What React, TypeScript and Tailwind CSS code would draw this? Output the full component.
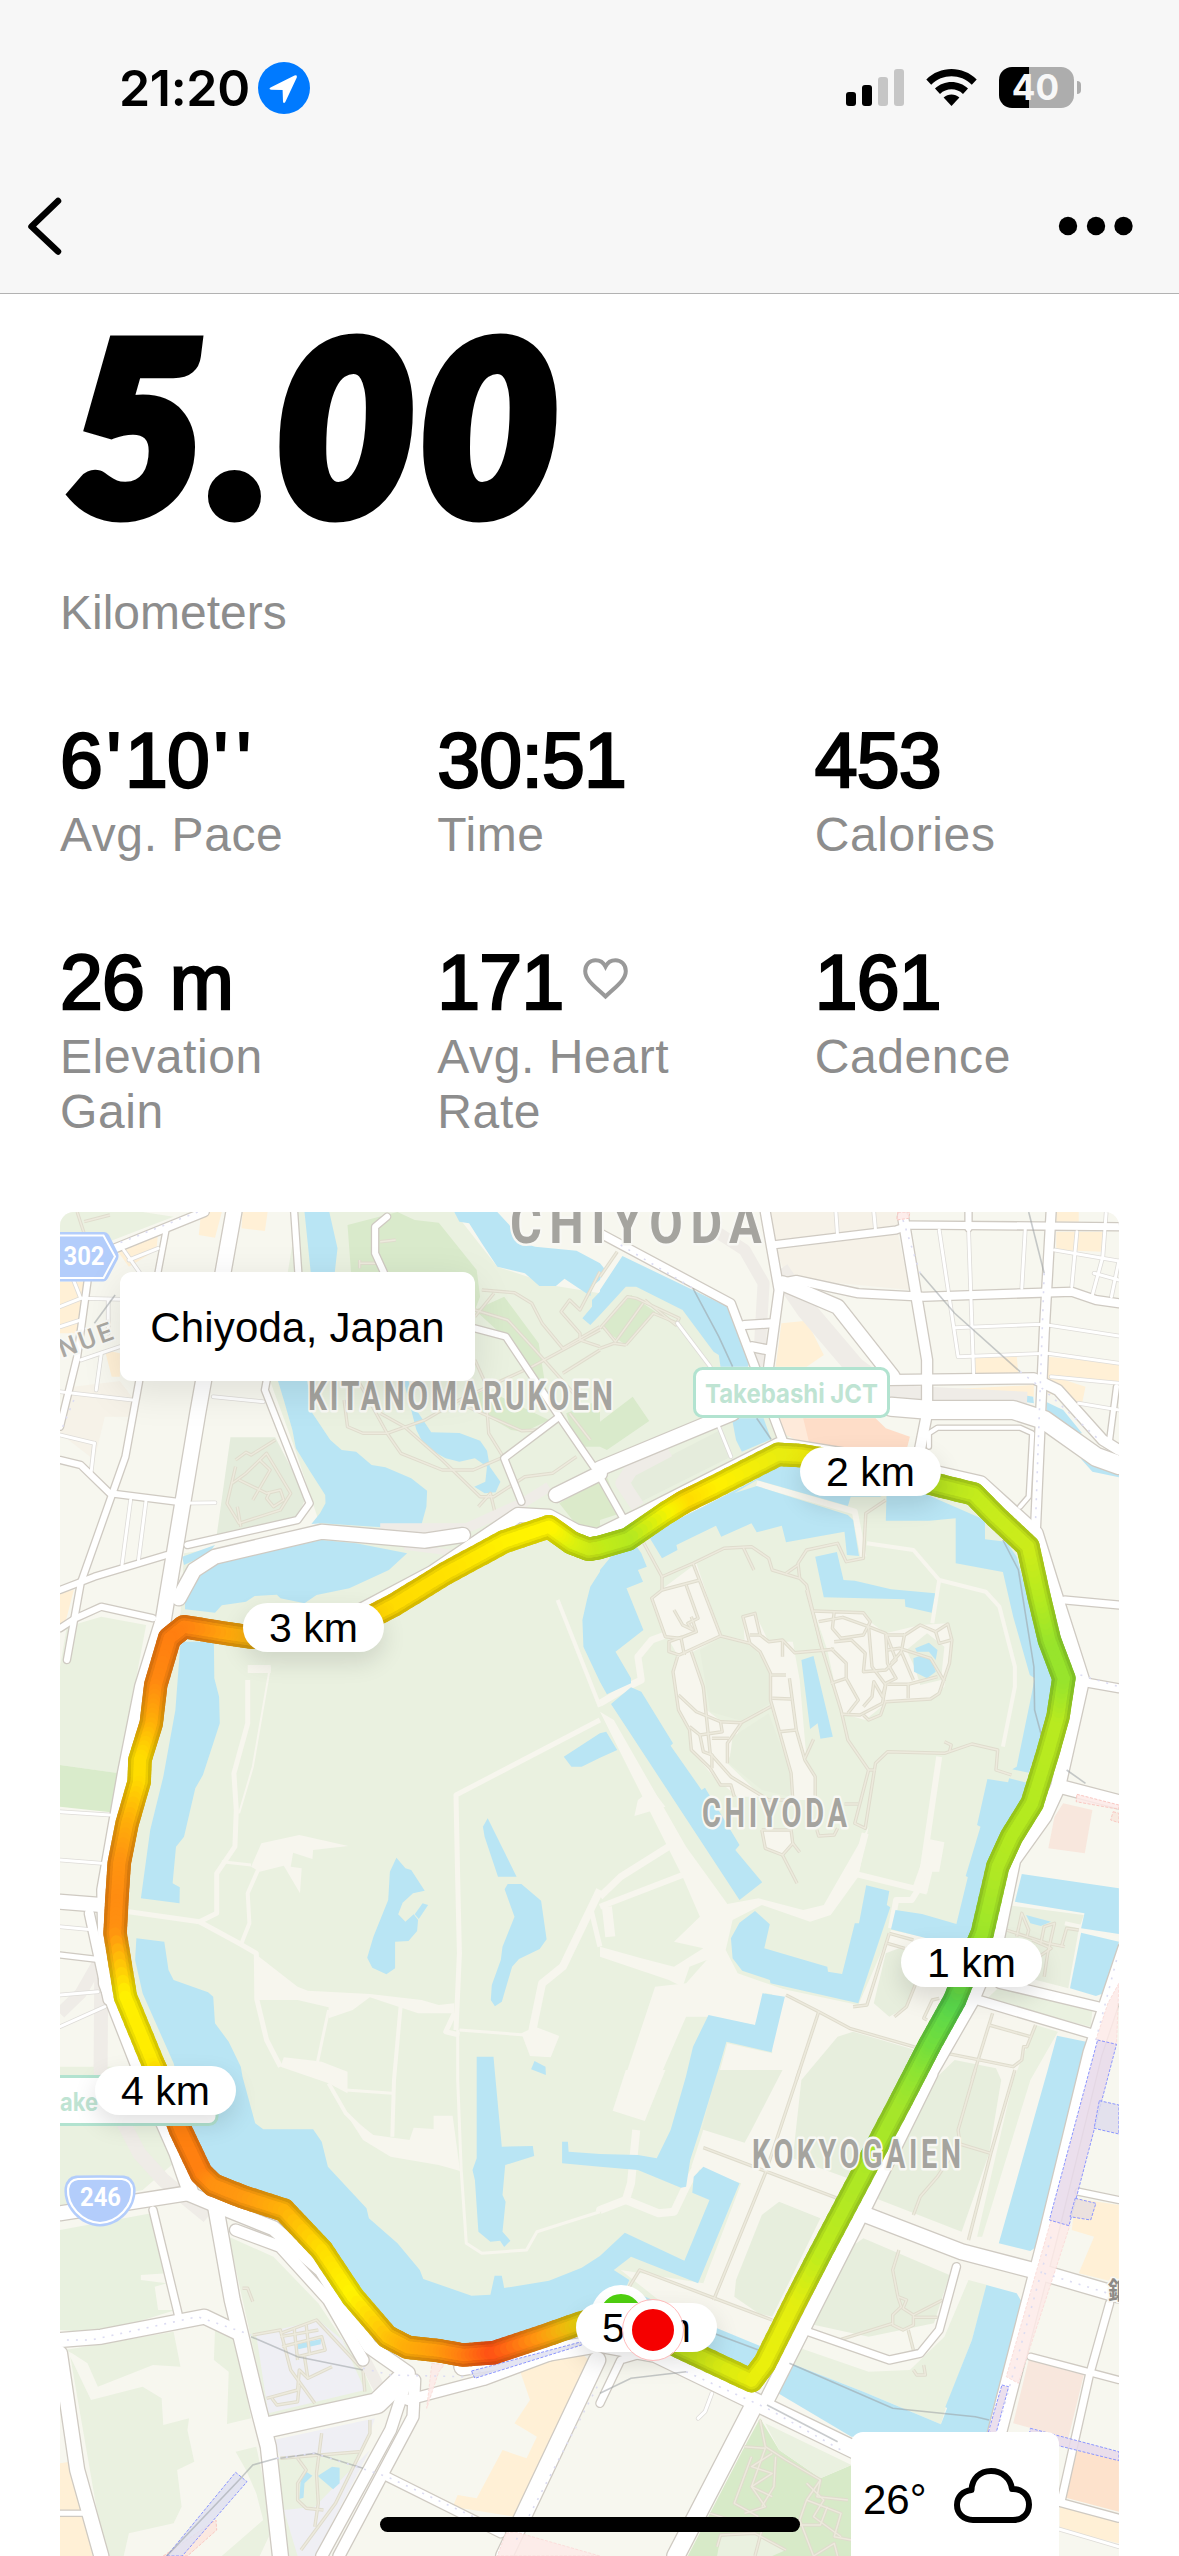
import React from "react";

/* ------------------------------------------------------------------ */
/* Map geometry. The map is surveyed on six sheets (A–F); a letter in a  */
/* point list switches to that sheet's origin.                          */
/* ------------------------------------------------------------------ */

const SHEETS: Record<string, [number, number]> = {
  A: [60, 1200],
  B: [600, 1200],
  C: [60, 1600],
  D: [600, 1600],
  E: [60, 2070],
  F: [600, 2070],
};

type Point = [number, number];

function toPoints(src: string): Point[] {
  let origin = SHEETS.A;
  const out: Point[] = [];
  for (const token of src.trim().split(/\s+/)) {
    if (SHEETS[token]) {
      origin = SHEETS[token];
      continue;
    }
    const [x, y] = token.split(",").map(Number);
    out.push([origin[0] + x / 2.904, origin[1] + y / 3]);
  }
  return out;
}

function toPath(src: string, closed = false): string {
  return (
    "M" +
    toPoints(src)
      .map(([x, y]) => `${x.toFixed(1)} ${y.toFixed(1)}`)
      .join("L") +
    (closed ? "Z" : "")
  );
}

const LAND: [string, string][] = [
  // parks and palace grounds
  ["#eaf1e0", "A 0,36 240,36 330,50 130,130 0,110"],
  ["#eaf1e0", "A 690,36 1145,36 1270,200 1440,258 1568,280 B 0,280 75,200 240,300 385,500 600,655 540,720 0,980 A 1500,1000 1400,930 1190,1000 760,990 680,740 610,543"],
  ["#eaf1e0", "A 350,1240 360,1060 760,1000 1420,960 1500,1040 B 0,1060 300,920 520,760 1080,880 1250,1050 1300,1300 D 1345,240 1300,420 1220,640 1140,800 1080,1050 900,1440 F 440,930 0,780 E 1500,730 1170,850 990,820 780,540 640,400 430,330 C 280,1400 180,1180 160,990 180,750 230,480 300,150"],
  ["#d9eacb", "A 835,75 980,36 1030,60 1100,68 1210,210 1220,290 1205,330 1100,543 860,543 845,216"],
  ["#d9eacb", "A 1205,330 1290,290 1390,430 1410,560 1440,640 1350,500 1290,410"],
  ["#d9eacb", "A 1160,600 1240,570 1300,600 1420,660 1350,695 1310,690"],
  ["#d9eacb", "A 1470,640 1568,600 B 0,665 95,590 143,663 20,750 0,740 A 1500,740"],
  ["#dbeaca", "A 1450,910 1568,840 B 20,830 60,940 0,960 A 1568,985 1500,975"],
  ["#d9eacb", "B 5,385 90,285 160,335 75,435"],
  ["#e5ecdc", "B 85,830 350,690 380,770 110,910"],
  ["#e4ecdc", "A 495,712 625,712 715,890 690,950 455,1005"],
  ["#eaf1e0", "C 20,80 120,50 250,75 170,520 0,495 0,200"],
  ["#d9ebcb", "C 0,495 172,520 148,637 0,620"],
  ["#eaf1e0", "C 0,1400 170,1400 E 290,168 330,280 240,360 0,410"],
  ["#e8f1df", "E 0,480 265,430 310,610 235,615 235,630 310,640 275,650 285,720 335,720 120,790 0,780"],
  ["#eaf1e0", "E 490,500 620,560 750,700 880,900 910,970 605,1040"],
  ["#eaf1e0", "E 15,840 330,785 350,890 270,885 110,950 80,880 35,850"],
  ["#eaf1e0", "E 450,780 510,810 555,1045 485,1062 490,905 447,870"],
  ["#eaf1e0", "E 30,860 90,990 240,950 295,985 300,1065 375,1045 370,1080 390,1175 340,1200 353,1310 330,1360 200,1390 185,1458 130,1458"],
  ["#eaf1e0", "E 510,1145 570,1130 620,1370 580,1458 470,1458 590,1350 570,1270 540,1200"],
  ["#eaf1e0", "E 620,1165 880,1140 800,1300 700,1458 650,1458"],
  ["#efeff4", "E 570,795 750,750 820,810 885,960 605,1030"],
  ["#efeff4", "E 620,1110 915,1045 880,1140 640,1165"],
  ["#efeff4", "E 650,1320 740,1310 900,1140 740,1458 690,1458"],
  ["#d7eac8", "F 420,1130 465,1045 520,1140 640,1225 730,1185 730,1458 255,1458"],
  ["#eaf1e0", "F 480,1060 730,1185 640,1225 520,1140"],
  ["#eaf1e0", "F 350,1400 450,1390 540,1440 500,1458 340,1458"],
  // built-up blocks
  ["#fff0d6", "A 410,36 470,36 450,113 403,105"],
  ["#fff0d6", "A 530,36 603,36 595,93 527,85"],
  ["#fff0d6", "A 165,150 285,100 280,150 200,200"],
  ["#fff0d6", "A 0,245 70,245 50,400 0,400"],
  ["#fff0d6", "A 130,450 174,460 174,530 150,530"],
  ["#fff0d6", "A 0,1180 40,1170 10,1290 0,1290"],
  ["#f6f2e8", "A 40,560 174,543 215,600 200,650 130,650 100,780 0,700"],
  ["#f6f2e8", "B 480,36 860,36 865,85 510,130"],
  ["#f6f2e8", "B 510,150 865,100 900,270 600,240 540,225"],
  ["#fff0d6", "B 527,370 600,362 650,465 600,500 510,500"],
  ["#feeada", "B 500,655 595,655 610,740 540,705"],
  ["#feddc8", "B 590,655 800,655 830,685 900,710 890,750 610,740"],
  ["#fff0d6", "B 1090,465 1210,468 1215,525 1090,525"],
  ["#fff0d6", "B 1300,470 1507,490 1507,545 1320,530 1410,560 1400,610 1300,580"],
  ["#fff0d6", "B 975,570 1260,555 1260,590 980,585"],
  ["#fff0d6", "B 1325,36 1390,36 1390,65 1325,65"],
  ["#fff0d6", "B 1325,95 1460,95 1460,155 1325,150"],
  ["#f8e7dd", "D 1345,610 1430,630 1408,760 1302,745 1320,650"],
  ["#e9efdf", "D 1180,915 1405,945 1390,990 1360,1165 1230,1130 1160,1050"],
  ["#eaf1e0", "D 1160,1160 1430,1230 1425,1280 1120,1200"],
  ["#fff0d6", "F 1380,385 1507,405 1507,640 1390,610 1435,500 1370,480"],
  ["#f8e7dd", "F 1245,870 1405,915 1360,1105 1200,1060"],
  ["#fde2cc", "F 1380,1140 1507,1170 1507,1325 1342,1280"],
  ["#fff0d6", "F 1335,1310 1507,1350 1507,1420 1335,1380"],
  ["#fff0d6", "E 1335,900 1500,835 1545,880 1320,1340 1140,1310 1155,1275 1210,1285 1285,1140 1355,1165 1385,1100 1320,1060 1365,990"],
  ["#fff0d6", "E 0,1180 30,1175 95,1458 0,1458"],
  // plazas inside the palace grounds
  ["#f7f6ee", "D 500,1160 750,1215 845,990 1080,1040 1050,1200 F 440,910 60,600 300,640 410,340 265,290 300,180 D 370,1330 500,1360"],
  ["#f7f6ee", "F 820,100 980,20 D 1100,1210 1440,1290 F 1250,680 780,560 600,780 700,430"],
  ["#f7f6ee", "D 160,1160 250,1150 310,1080 330,1100 480,1180 450,1275 320,1250 250,1250 170,1440 70,1440"],
  ["#f7f6ee", "F 75,0 190,0 130,153 37,122"],
  ["#f7f6ee", "D 0,335 40,360 250,740 370,912 460,895 590,930 650,915 780,680 750,830 670,945 610,965 470,915 385,960 365,1050 400,1120 540,1170 540,1190 400,1165 340,1130 310,1080 260,1100 240,1160 200,1140 0,1070 0,1040 120,1075 215,1100 300,1045 215,1025 290,950 240,830"],
  ["#f7f6ee", "C 565,1060 690,1160 720,1172 900,1182 1050,1200 1100,1215 1145,1210 1145,1240 1040,1240 900,1192 850,1230 780,1255 780,1222 690,1200 565,1200"],
  ["#f7f6ee", "C 555,800 585,730 695,705 837,738 735,750 733,777 677,758 670,800 702,805 697,880 650,797 580,815"],
  ["#f7f6ee", "C 1340,1300 1380,1280 1450,1308 1425,1372 1365,1368"],
  ["#f7f6ee", "C 640,1400 650,1372 720,1380 760,1385 835,1415 E 835,70 780,40"],
  ["#f7f6ee", "E 830,130 910,195 1015,210 1027,173 1085,177 1085,137 1140,137 1162,303 1100,285 960,260 880,210"],
  ["#f7f6ee", "D 958,718 1000,727 985,815 965,815 950,880 905,870"],
  ["#f7f6ee", "D 100,648 110,600 150,568 190,620"],
  ["#f7f6ee", "D 620,30 765,35 790,70 830,100 930,75 1010,70 1020,120 1000,260 960,295 830,310 770,360 700,340 660,150"],
  ["#f7f6ee", "B 150,1190 280,1090 350,1305 D 420,120 415,50 450,40 490,125 560,125 580,240 600,480 625,530 625,600 560,600 556,520 495,320 470,160 435,130 350,110 270,155 310,330 350,362 410,368 370,490 470,590 400,590 330,530 265,450 260,380 225,330 212,215 225,165 195,110"],
  ["#f7f6ee", "D 470,690 560,690 560,730 530,765 480,745"],
  ["#e7eedd", "D 290,150 350,115 440,135 490,200 495,310 410,362 320,335"],
  ["#e7eedd", "D 490,340 555,520 550,590 470,570 375,490 385,410"],
  ["#e9efdf", "D 915,205 890,150 950,100 1000,140 990,240 930,255"],
  ["#e7eedd", "D 585,1440 690,1310 735,1295 915,1350 F 820,150 720,325 560,265"],
  ["#e7eedd", "F 340,0 530,0 440,180 420,218 295,178"],
  ["#e7eedd", "F 520,395 640,445 500,740 460,730 390,680 395,630 470,435"],
  ["#e7eedd", "D 1030,1380 1150,1405 F 1165,30 1130,250 1050,485 800,385 960,40"],
  ["#eaf1e0", "D 1265,1275 1330,1295 1250,1440 F 1110,500 1095,500 1200,30"],
  ["#e7eedd", "F 765,505 1015,615 970,760 780,800 600,760 730,530"],
  ["#eaf1e0", "F 1070,630 1125,645 1080,810 1005,1010 990,1063 765,965 550,878 570,830 780,905 900,900 1000,800"],
  ["#e7eedd", "D 830,1060 880,1040 930,1130 890,1220 840,1250 795,1210"],
];

const WATER: string[] = [
  "A 710,36 782,36 806,145 798,216 760,300 718,543 733,640 785,720 818,750 860,755 905,795 945,802 1020,835 1066,872 1064,920 1048,980 980,985 760,970 730,972 755,940 771,910 770,885 725,812 685,745 675,690 650,600 633,543 680,400 728,216",
  "A 1145,36 1160,65 1188,70 1225,130 1270,200 1350,220 1392,258 1440,258 1465,236 1540,288 1545,260 1568,240 B 12,205 0,190 A 1500,152 1380,140 1330,125 1305,75 1270,36",
  "A 1545,300 1545,320 1517,355 1540,375 1568,345 B 75,260 105,260 240,330 330,455 345,465 350,500 430,500 436,470 410,400 370,320 270,270 65,168 0,270 A 1568,275",
  "B 383,655 475,655 497,718 412,755 395,720",
  "A 998,543 1012,543 1035,630 1078,697 1160,699 1220,722 1240,752 1248,800 1279,845 1265,877 1233,880 1203,860 1235,845 1240,800 1205,775 1160,785 1120,775 1060,740 1035,690 1020,630",
  "A 363,1228 450,1238 470,1216 540,1205 565,1188 630,1184 640,1195 710,1210 745,1185 840,1165 955,1110 1008,1060 860,1030 760,1020 450,1090 420,1110 395,1145 363,1200",
  "A 360,1095 355,1070 450,1035 430,1062",
  "B 145,1015 180,1075 225,1050 222,1035 337,977 352,1010 440,970 455,997 528,977 540,1027 710,995 717,1065 752,1068 735,960 720,945 455,858 390,880 455,840 720,918 728,890 818,890 770,870 582,790 520,785 450,840 300,920 145,1000",
  "B 832,885 830,962 957,962 1033,955 1033,1090 1170,1116 1200,1250 D 1248,225 1262,235 1252,290 1210,500 1197,508 1245,518 1283,410 1320,240 1245,0 B 1210,1070 1180,1025 1118,1018 1118,960 940,880",
  "B 625,1070 688,1056 707,1140 740,1142 845,1168 973,1180 963,1238 887,1220 885,1198 650,1192",
  "B 0,1110 40,1060 100,1030 120,1060 136,1100 110,1110 125,1145 77,1165 126,1290 D 45,155 90,235 90,250 20,283 C 1568,245 1520,140 1517,60 1530,0 A 1540,1160 1568,1115",
  "D 32,312 90,262 120,275 212,430 205,437 295,570 305,563 405,735 393,750 471,847 405,900",
  "D 585,180 620,168 676,410 640,416 632,370 610,387",
  "C 1463,470 1568,400 D 18,395 50,450 0,473 C 1515,500 1485,500",
  "D 910,175 935,165 965,180 975,215 950,235 912,215",
  "D 915,145 955,128 980,150 975,180 955,155 920,155",
  "D 380,1015 405,968 450,933 493,973 477,1045 660,1100 662,1115 703,1122 740,970 752,970 773,856 840,873 833,915 843,922 750,1210 495,1150 493,1140 413,1112 385,1075",
  "D 1125,537 1185,547 1188,535 1240,548 1228,620 1150,800 1088,1025 1000,1028 845,988 858,930 935,942 1035,972 1068,832 1062,828 1105,680 1095,675",
  "D 1225,822 1507,865 1507,1002 1397,985 1407,940 1205,905",
  "D 1397,998 1507,1025 1475,1175 1440,1188 1365,1165",
  "D 1237,945 1310,965 1280,978 1250,970",
  "D 1327,1307 1412,1325 1427,1355 F 1417,0 1275,525 1250,543 1158,520 1300,0",
  "F 1122,645 1210,670 1227,700 1120,1100 730,1100 510,965 550,878 765,965 990,1063 1008,1015 1003,1010 1080,810",
  "D 472,1180 537,1190 498,1357 367,1325 335,1440 F 343,0 290,180 262,270 250,350 235,353 110,300 0,290 E 1458,280 1458,215 1475,215 1477,245 F 0,252 110,255 165,265 205,180 255,0 D 247,1440 270,1340 315,1245 450,1275",
  "C 222,1015 303,1025 315,1110 330,1140 430,1177 445,1190 450,1270 490,1325 525,1400 E 530,20 567,160 590,178 735,178 760,215 778,290 890,415 897,445 980,520 1045,600 1055,627 1195,677 1250,674 1262,617 1283,617 1290,654 1420,632 1515,593 1568,558 F 72,488 245,572 318,390 268,368 272,320 300,290 405,340 285,640 90,560 40,600 85,630 75,655 340,775 465,828 435,890 240,830 0,770 E 1500,740 1300,805 1170,840 1000,820 900,720 780,540 660,410 450,320 380,170 C 330,1390 240,1180 218,1080",
  "C 350,125 447,125 448,235 462,290 464,370 415,525 393,565 360,710 337,740 327,850 348,862 347,910 235,895 262,690 300,530 335,330",
  "C 977,773 1003,805 1020,810 1059,872 1025,880 995,908 982,943 1003,965 1027,943 1040,960 1037,993 1012,1023 973,1025 973,1105 948,1123 907,1103 892,1073 910,1010 953,900 958,815",
  "C 1053,910 1069,915 1042,957 1030,943",
  "C 1242,655 1326,830 1272,830 1233,710 1228,680",
  "C 1300,852 1340,852 1397,902 1413,1018 1393,1047 1333,1077 1313,1100 1283,1205 1263,1219 1251,1200 1254,1155 1280,1080 1285,1040 1320,950 1291,868",
  "C 1210,1370 1259,1370 1265,1440 E 1283,230 1373,228 1377,258 1293,285 1285,375 1294,395 1285,485 1308,512 1290,531 1278,512 1250,515 1215,485 1205,330 1198,300 1210,265",
  "C 1378,1383 1410,1400 1411,1425 1368,1408",
  "E 690,822 758,807 757,823 692,838",
  "E 748,1218 790,1190 812,1193 812,1240 793,1258",
  "E 700,1215 715,1205 733,1217 710,1240 707,1283 695,1287",
  "B 990,590 1200,580 1258,590 1260,610 1190,600",
  "B 1295,605 1345,630 1400,700 1380,700 1298,640",
  "B 1395,775 1450,800 1507,825 1507,832 1430,815",
];

const PALACE_LANES: [number, string][] = [
  [4, "C 1445,0 1568,320"],
  [7, "D 0,310 90,255 120,240 110,170 150,120 190,105"],
  [5, "C 1568,360 1150,585 1155,840 1160,1060 1150,1290"],
  [3, "C 1155,1290 1155,1440 E 1165,300 1180,520 1225,550 1355,540 1385,485 1568,425"],
  [5, "C 200,935 405,965 455,940 455,820 508,740 512,630 505,520 545,370 545,240"],
  [2, "C 520,640 560,500 610,200"],
  [5, "C 405,965 520,1030 570,1060 572,1200 600,1320 640,1400"],
  [4, "E 780,40 830,130 910,210"],
  [3, "C 470,785 555,795"],
  [4, "C 575,810 545,880 550,970 525,1035"],
  [4, "C 990,1210 970,1440 E 965,200"],
  [3, "E 830,60 965,70"],
  [3, "C 780,1230 745,1400"],
  [3, "C 1160,1290 1350,1305"],
  [5, "C 1145,1240 1120,1295 1160,1305"],
  [8, "C 1370,1300 1400,1150 1460,1100 1568,870"],
  [5, "C 1540,920 1568,1040"],
  [7, "D 0,890 60,830 230,720"],
  [6, "D 0,920 240,825"],
  [10, "D 20,920 30,1010"],
  [6, "D 985,470 930,860 905,900 860,900 845,985"],
  [6, "D 735,820 950,875"],
  [7, "D 770,700 740,820"],
  [4, "B 775,1030 910,1050 985,1140 1120,1175 1160,1220 1205,1400 D 1205,260 1170,440"],
  [4, "B 985,1140 965,1270"],
  [6, "B 455,850 740,935 765,1070"],
  [8, "F 105,180 90,340 75,390 0,420 E 1568,425"],
  [8, "F 75,390 170,430 215,425 245,360 285,280"],
  [8, "C 545,207 612,207"],
  [4, "D 1350,970 1507,1005"],
];

const TRAILS: string[] = [
  "B 125,1025 180,1130 270,1090 360,1045 440,1040 490,1075 500,1110 580,1135 600,1155 D 640,130 700,330 720,420 780,510 740,670 770,685 800,490 835,455 1000,460 1080,432 1155,450 1150,510 1195,525",
  "B 180,1130 180,1170 150,1195 190,1310 D 230,115 280,95 265,50",
  "B 270,1090 350,1305",
  "B 180,1170 290,1140",
  "B 250,1155 285,1255 255,1270 270,1290 240,1275 215,1230",
  "B 415,1040 447,1110",
  "B 580,1135 575,1090 600,1050 690,1030 715,1085 765,1075 772,940 830,900",
  "B 540,1120 575,1095",
  "D 350,108 230,165 200,155 200,125 235,112 245,165",
  "D 225,170 212,215 228,330 260,390 265,450 320,505 350,555 380,555 390,590",
  "D 265,155 300,260 320,460 380,530 490,600 560,600 555,520 495,300 495,220 465,155 435,130 350,108",
  "D 228,285 280,335 350,365 410,368 495,320",
  "D 260,380 290,405 355,395 350,365",
  "D 290,405 300,455 325,465 325,505",
  "D 325,415 375,415",
  "D 410,370 370,430 370,490",
  "D 435,130 415,50 450,40 465,105 490,125 530,120 565,158 680,148",
  "D 435,105 465,105",
  "D 530,120 530,170",
  "D 550,235 570,390 595,480 625,530 625,600",
  "D 500,295 555,297",
  "D 495,225 540,225",
  "D 520,395 570,390",
  "D 620,418 595,475",
  "D 600,-30 645,145",
  "D 620,33 765,38 785,65 765,105 700,115 675,85 680,35",
  "D 635,65 705,52 780,80 790,200 830,255 820,310 755,345 700,343",
  "D 670,145 715,190 715,235 750,300 720,340",
  "D 670,250 715,235",
  "D 680,125 730,120 770,160 765,215 830,210 860,180 830,100 780,80",
  "D 830,105 835,190 860,235 830,250 820,290 795,245 790,290 765,320",
  "D 830,105 885,105 930,75 975,95 1010,72 1022,120 1015,190 985,280 960,297 830,305",
  "D 975,95 985,130 1020,120",
  "D 885,100 875,155 910,240",
  "D 835,150 870,145 960,175 1000,245",
  "D 875,155 845,190",
  "D 765,345 780,360 815,345 830,300",
  "D 895,250 895,295",
  "D 835,253 895,253 980,230",
  "D 470,690 480,745 530,765 560,730 555,690 470,690",
  "D 530,765 572,850",
  "D 560,730 580,757",
  "D 630,690 635,708 680,705 690,685",
  "D 710,612 750,612",
  "D 780,510 800,510",
  "D 1000,425 1020,435 1015,455",
  "D 840,1000 775,1215 735,1220",
  "D 840,1000 910,1020",
  "D 835,1030 885,1045",
  "D 540,1185 635,1235 725,1285 910,1340 1200,1400 1225,1380 1230,1340 1240,1340 1265,1275",
  "D 635,1235 570,1440",
  "D 1140,1240 1080,1440",
  "D 1130,1275 1250,1310",
  "D 1180,990 1300,1030 1350,1040",
  "D 1340,1040 1355,985 1390,990",
  "D 1210,1010 1225,940 1245,990 1240,1010",
  "D 1280,1030 1290,980 1320,970 1300,1060 1290,1130",
  "D 1255,1020 1310,1045 1260,1080",
  "D 925,1130 890,1220 855,1250",
  "D 985,1195 965,1200 940,1255 950,1260",
  "F 580,0 480,310 330,690",
  "F 300,233 690,385",
  "F 85,650 115,600 500,750",
  "F 1090,0 1040,180 1045,220 980,320 930,380 910,435",
  "F 1045,222 1135,250",
  "F 1205,0 1135,250 1070,510",
  "F 868,540 850,600 865,680 890,690 880,715 910,735 910,765 880,780 850,765 850,735 875,710 865,680",
  "F 910,735 995,690",
  "F 910,742 980,742",
  "F 895,780 910,840",
  "F 850,760 700,808",
  "F 910,900 920,915 945,915 940,885",
  "F 465,1050 480,1130 540,1170 640,1230 600,1290 580,1350 620,1458",
  "F 420,1130 480,1135 440,1250 480,1310 420,1330",
  "F 440,1160 390,1300 460,1340",
  "F 500,1150 440,1190 500,1210 440,1250 500,1280",
  "F 510,1160 505,1250 470,1310",
  "F 640,1230 630,1280 720,1290",
  "F 600,1290 700,1330 680,1400 730,1410",
  "F 600,1240 650,1290 620,1340 700,1400",
  "F 580,1365 640,1365 660,1310",
  "F 320,1330 470,1380 450,1458",
  "F 340,1430 350,1395 450,1390 540,1440",
  "F 620,1458 680,1420 690,1458",
  "A 1225,270 1320,278 1370,310 1400,370 1460,445 1568,380",
  "A 1205,330 1300,360 1380,450 1500,590",
  "A 1260,280 1205,350",
  "A 1568,215 1510,330 1480,300 1455,335 1510,400 1510,420 1568,440",
  "A 825,600 835,680 880,700 950,700 1060,660 1160,600 1370,500 1568,390",
  "A 870,550 950,700 990,760 1110,810 1200,810 1290,770",
  "A 930,640 1000,680 1110,780 1220,890 1260,890 1350,830 1430,820 1500,770",
  "A 1240,630 1245,700 1290,775",
  "A 1460,520 1568,450",
  "A 1480,640 1540,720",
  "A 1160,610 1340,692 1390,690",
  "A 1205,480 1240,560",
  "A 870,180 870,205",
  "A 870,190 940,190",
  "A 930,125 975,120",
  "A 1215,920 1250,880 1265,945",
  "A 510,780 540,757 555,765 625,720",
  "A 510,800 485,910 520,970 640,930 670,880 600,760 540,820 500,850",
  "A 520,840 600,880 640,870 650,900 620,920 600,895 610,875",
  "A 580,780 610,810 560,900",
  "A 515,920 525,980",
  "B 0,385 80,290 105,295 230,355 220,375 130,300",
  "B 75,435 155,340 225,370",
  "B 0,445 40,430 75,435",
  "B 50,155 0,230",
  "B 10,380 45,425 125,310",
  "E 640,790 745,750 880,900 885,965",
  "E 560,795 640,780 670,900 740,1000",
  "E 645,830 760,800 770,840 690,860",
  "E 640,800 750,780",
  "E 680,775 690,870",
  "E 715,765 725,855",
  "E 600,985 690,960 695,900 720,925 790,890",
  "E 695,945 690,995 630,1005 615,985",
  "E 710,860 720,925",
  "E 900,1050 900,1090 800,1300 700,1440",
  "E 760,1090 745,1210 750,1300 740,1370",
  "E 690,1165 715,1200 690,1240 690,1290 715,1315 765,1320",
  "E 640,1165 870,1145",
  "E 530,655 545,655 560,695",
  "A 50,36 70,100",
  "A 70,65 145,45",
];

const EXPRESSWAY: [number, string][] = [
  [12, "B 330,90 420,150 475,250 465,430 470,500"],
  [20, "B 520,210 600,330 740,500 850,585 1240,605"],
  [14, "B 110,920 65,850 90,810 200,750"],
  [12, "C 110,1090 60,1180 0,1240"],
  [14, "C 120,1100 118,1400 E 120,30 230,250 300,330 430,440"],
  [12, "E 880,860 930,960"],
  [10, "A 930,985 1180,985 1350,905 1420,860"],
  [6, "A 1000,1040 1150,1060"],
];

const ROADS: [number, string][] = [
  // side streets
  [3, "A 445,590 590,605"],
  [3, "A 0,575 210,600"],
  [3, "A 60,295 174,298"],
  [3, "A 185,150 230,216"],
  [3, "A 205,900 180,1095"],
  [3, "A 250,900 228,1080"],
  [3, "A 340,910 450,908"],
  [3, "A 0,320 60,295 30,216"],
  [3, "A 0,380 60,360"],
  [3, "A 120,460 105,570"],
  [3, "A 60,480 174,440"],
  [3, "A 200,180 285,145"],
  [3, "A 140,298 140,400"],
  [3, "A 100,730 90,820"],
  [3, "A 100,730 0,705"],
  [3, "B 1070,85 1085,520"],
  [3, "B 985,90 1040,470 1300,460 1507,490"],
  [3, "B 1235,85 1225,265"],
  [3, "B 1030,383 1285,373 1507,408"],
  [3, "B 1385,95 1370,260"],
  [3, "B 1320,150 1507,183"],
  [3, "B 1470,36 1460,170 1430,285"],
  [3, "B 1435,220 1507,240"],
  [3, "B 1507,183 1485,290"],
  [3, "B 685,36 690,110"],
  [3, "B 795,36 800,90"],
  [3, "B 1310,530 1507,550"],
  [3, "B 1390,610 1507,630"],
  [3, "B 225,370 320,500"],
  [3, "B 345,680 380,770"],
  [3, "C 0,780 120,790"],
  [3, "C 0,635 145,645"],
  [3, "C 0,980 100,990"],
  [3, "C 0,1185 110,1175"],
  [3, "C 0,1280 130,1220"],
  [3, "F 325,970 305,1025 285,1045"],
  [3, "F 1310,1370 1507,1430"],
  [4, "B 955,740 955,700 980,683 1220,683 1255,700 1245,890 1220,920"],
  // district streets
  [5, "A 310,80 285,216"],
  [6, "A 80,245 50,470 0,680"],
  [6, "A 230,543 190,770 60,1150 20,1380"],
  [6, "A 0,780 60,795 145,880 340,905"],
  [6, "A 0,1170 100,1130 310,1065"],
  [6, "A 370,1035 690,960 725,910 715,885 595,570 600,543"],
  [6, "A 680,36 692,216"],
  [6, "A 0,1285 45,1255 120,1220 270,1255"],
  [5, "C 0,1065 105,1078"],
  [5, "E 0,1330 80,1330"],
  [6, "B 5,840 65,950"],
  [5, "B 1480,720 1500,560"],
  [6, "B 1070,36 1070,85"],
  [6, "A 950,50 915,80 915,160 940,216"],
  [6, "A 1205,385 1295,410 1450,650 1550,800"],
  [6, "A 1450,650 1290,775 1340,905"],
  [7, "E 270,420 345,740"],
  [7, "F 0,1000 60,870 160,840"],
  [7, "F 590,780 840,870 930,850 985,780 1035,590"],
  [6, "F 1390,365 1507,390"],
  [6, "F 1250,860 1507,930"],
  [7, "F 1480,700 1420,920 1340,1290"],
  [7, "F 1310,1290 1507,1345"],
  [7, "B 1350,1200 1507,1215"],
  [8, "D 1400,245 1507,265"],
  [9, "D 1160,1150 1465,1225"],
  [9, "D 1080,1195 1440,1305"],
  // avenues
  [8, "A 420,36 160,145"],
  [8, "B 0,100 380,310 530,720"],
  [9, "B 480,36 520,270 490,500"],
  [7, "B 500,135 860,90 900,75 1507,80"],
  [8, "B 520,250 570,240 750,280 940,290 1370,275 1440,300 1507,310"],
  [8, "B 420,375 500,370"],
  [9, "B 440,440 490,450"],
  [10, "B 880,50 950,480 950,640 930,745"],
  [9, "B 1310,36 1290,400 1265,980"],
  [14, "B 530,250 690,320 850,530"],
  [10, "B 840,540 1260,535 1330,570 1460,720 1507,750"],
  [18, "B 845,620 960,630 1200,630 1290,660 1440,770 1507,795"],
  [13, "D 1340,560 1507,605"],
  [15, "F 760,430 1050,545 1290,610 1507,675"],
  [14, "E 0,430 370,370 440,400 620,475 760,600 900,830 1010,910"],
  [11, "E 510,480 640,530 780,690 880,870"],
  [14, "C 0,905 120,915"],
  [9, "C 85,940 140,1200"],
  [14, "E 0,810 120,800 420,740 520,790"],
  [15, "E 450,400 500,690 575,1010 605,1130 640,1458"],
  [14, "E 0,850 50,1200 120,1458"],
  [20, "E 610,1070 920,1000 1000,920"],
  [10, "E 1010,990 1230,930 1568,800"],
  [11, "E 1010,920 960,1080 760,1458"],
  [11, "E 1030,930 1025,1040 810,1458"],
  [8, "E 950,1220 1280,1390"],
  [16, "E 1560,870 1290,1458"],
  [15, "A 505,36 400,640 345,980 300,1260 C 240,260 190,520 130,870 135,1150 230,1400 E 340,250 380,370"],
  [14, "A 345,1195 390,1110 450,1070 760,995 1060,1022 1170,1005"],
  [14, "A 1440,885 1568,820 B 0,805 385,640"],
  [14, "A 870,1235 1080,1120 1330,945 1420,950 1500,995 1568,1010 B 0,1005 130,940 520,735 850,790 1105,850 1265,1000 1310,1150 1400,1440 D 1400,240 1330,560 1290,650 1200,780 1150,1030 1080,1200 930,1470 F 960,10 740,470 480,1000"],
  [17, "E 1170,890 F 0,820 160,850 460,1000 760,1150"],
  [17, "F 440,1020 220,1458"],
  [18, "D 1530,1050 1430,1360 F 1300,500 1150,1100"],
];

const RAILS: string[] = [
  "B 270,265 345,410 385,500",
  "B 455,655 497,718",
  "B 930,220 1030,340 1220,515",
  "B 1245,36 1290,220",
  "F 0,970 90,925 250,905",
  "F 550,880 850,1015 1090,1040 1130,1050",
  "F 330,790 460,840",
  "E 555,800 690,860 880,900",
  "E 640,1165 740,1150 880,1195",
  "E 520,1230 560,1185 630,1165",
  "E 310,1458 520,1230",
  "F 485,1005 690,1115",
  "B 1170,1020 1215,1110 1260,1400 D 1262,330 1283,410",
  "D 1355,510 1410,550",
  "A 100,370 160,285",
];

const SUBWAYS: string[] = [
  "A 400,36 170,130",
  "A 40,600 0,700",
  "B 60,135 270,265",
  "B 880,60 930,220",
  "B 1290,220 1265,960",
  "B 1220,515 1290,570 1450,720",
  "E 20,810 90,810 400,740 555,795",
  "E 880,895 960,915 1170,920 1240,900",
  "E 630,1165 740,1150 950,1220 1200,1340",
  "E 1560,950 1320,1420",
  "F 250,905 485,1015 700,1140",
  "F 1310,500 1160,1060",
  "F 1290,610 1507,680",
  "D 1395,225 1507,260",
  "D 1500,1080 1440,1320",
];

const STATIONS: [string, string, string][] = [
  ["#fdeae8", "#f9c8c2", "B 865,36 900,36 897,55 862,60"],
  ["#fdeae8", "#f9c8c2", "D 1385,583 1507,615 1507,628 1383,605"],
  ["#f8e7dd", "#f9c8c2", "D 1490,635 1507,640 1507,668 1483,660"],
  ["#fdeae8", "#fbdedb", "E 1080,880 1115,885 1100,905 1065,1015"],
  ["#fdeae8", "#fbdedb", "E 1295,1390 1320,1385 1568,1458 1270,1458"],
  ["#fce5dd", "#f9c8c2", "E 300,1458 453,1350 455,1380 370,1458"],
  ["#dfe0f0", "#8c96ff", "E 310,1458 510,1207 543,1235 355,1458"],
  ["#dfe0f0", "#8c96ff", "E 1195,903 1515,815 1515,825 1205,925"],
  ["#fdeae8", "#fbdedb", "D 1507,1150 1475,1210 1440,1320 1500,1335"],
  ["#fdeae8", "#fbdedb", "F 1310,450 1365,465 1215,940 1180,920"],
  ["#e8d9ea", "#8c96ff", "D 1445,1320 1500,1333 F 1362,467 1305,450"],
  ["#e8d9ea", "#8c96ff", "F 1167,945 1187,950 1150,1090 1128,1086"],
  ["#dfddec", "#8c96ff", "F 1450,92 1507,105 1507,192 1435,175"],
  ["#e8dedf", "#8c96ff", "F 1380,385 1440,400 1425,450 1365,440"],
  ["#e8d9ea", "#8c96ff", "F 1250,1075 1507,1145 1507,1172 1245,1105"],
];

const ROUTE: [string, string][] = [
  ["F 110,770", "#b4e020"],
  ["F 250,840", "#bfe21c"],
  ["F 440,932", "#e8ee0c"],
  ["F 478,880", "#eaf00c"],
  ["F 570,690", "#e4ee10"],
  ["F 640,550", "#c0ec1c"],
  ["F 740,355", "#b0e824"],
  ["F 870,100", "#a4e62a"],
  ["D 925,1400", "#8ce432"],
  ["D 960,1330", "#74de3c"],
  ["D 1030,1200", "#58d64c"],
  ["D 1085,1060", "#88e232"],
  ["D 1110,1000", "#9ce62a"],
  ["D 1155,800", "#b0e824"],
  ["D 1195,710", "#b4ea20"],
  ["D 1255,610", "#b4ea20"],
  ["D 1300,460", "#b8ea20"],
  ["D 1330,350", "#b8ea20"],
  ["D 1347,235", "#98e42c"],
  ["D 1305,120", "#98e42c"],
  ["B 1275,1190", "#b4ea20"],
  ["B 1243,1040", "#ccec1a"],
  ["B 1150,950", "#c8ec1c"],
  ["B 1085,882", "#c4ec1c"],
  ["B 960,850", "#b4e020"],
  ["B 780,800", "#d0e018"],
  ["B 585,767", "#ece80c"],
  ["B 518,763", "#e8ec10"],
  ["B 330,862", "#fff000"],
  ["B 245,905", "#ffdc00"],
  ["B 190,940", "#f8f400"],
  ["B 80,1018", "#b4e820"],
  ["B 0,1042", "#c0ec18"],
  ["A 1535,1048", "#c8e818"],
  ["A 1485,1028", "#d8f010"],
  ["A 1420,980", "#fff500"],
  ["A 1290,1025", "#fff200"],
  ["A 1120,1120", "#ffe200"],
  ["A 970,1215", "#ffdc00"],
  ["A 830,1290", "#fcc808"],
  ["A 560,1312", "#f4b810"],
  ["A 480,1300", "#ffa80c"],
  ["A 360,1280", "#ff8410"],
  ["A 318,1315", "#ff7e10"],
  ["C 278,255", "#ff8810"],
  ["C 265,370", "#ffac08"],
  ["C 232,480", "#ffdc00"],
  ["C 230,545", "#ffdc00"],
  ["C 195,670", "#ffb008"],
  ["C 172,790", "#ff9410"],
  ["C 165,900", "#ff8c10"],
  ["C 160,1000", "#ff9010"],
  ["C 190,1190", "#fff000"],
  ["C 270,1390", "#ffec00"],
  ["E 310,70", "#ffb800"],
  ["E 350,180", "#ff8010"],
  ["E 410,310", "#ff8010"],
  ["E 445,345", "#ff9010"],
  ["E 530,380", "#ff9810"],
  ["E 650,420", "#ffb008"],
  ["E 760,540", "#ffdc00"],
  ["E 850,680", "#fff400"],
  ["E 950,800", "#ffc408"],
  ["E 1010,832", "#ffae08"],
  ["E 1100,842", "#ff9c0c"],
  ["E 1170,855", "#ff8010"],
  ["E 1260,848", "#ff5014"],
  ["E 1400,800", "#ff9810"],
  ["E 1510,760", "#e8cc0c"],
  ["F 90,720", "#b4e020"],
];

const channel = (hex: string, i: number) => parseInt(hex.slice(1 + i * 2, 3 + i * 2), 16);

function blend(a: string, b: string, t: number, shade: number): string {
  const c = [0, 1, 2].map((i) => Math.round((channel(a, i) * (1 - t) + channel(b, i) * t) * shade));
  return `rgb(${c.join(",")})`;
}

function RouteLayer({ width, shade }: { width: number; shade: number }) {
  const steps = 8;
  const parts: React.ReactNode[] = [];
  for (let i = 0; i < ROUTE.length - 1; i++) {
    const [ax, ay] = toPoints(ROUTE[i][0])[0];
    const [bx, by] = toPoints(ROUTE[i + 1][0])[0];
    for (let s = 0; s < steps; s++) {
      const t0 = s / steps;
      const t1 = (s + 1) / steps;
      parts.push(
        <line
          key={`${i}-${s}`}
          x1={ax + (bx - ax) * t0}
          y1={ay + (by - ay) * t0}
          x2={ax + (bx - ax) * t1}
          y2={ay + (by - ay) * t1}
          stroke={blend(ROUTE[i][1], ROUTE[i + 1][1], (t0 + t1) / 2, shade)}
        />,
      );
    }
  }
  return (
    <g strokeWidth={width} strokeLinecap="round">
      {parts}
    </g>
  );
}

function AreaLabel(props: { x: number; y: number; width: number; size: number; spacing: number; children: string }) {
  return (
    <text
      x={props.x}
      y={props.y}
      textLength={props.width + props.spacing * 0.7}
      lengthAdjust="spacingAndGlyphs"
      fontSize={props.size}
      letterSpacing={props.spacing}
      fill="#a5a49f"
      stroke="#f8f8f4"
      strokeWidth={5}
      strokeLinejoin="round"
      paintOrder="stroke"
      className="font-['Roboto',sans-serif] font-bold"
    >
      {props.children}
    </text>
  );
}

function StreetMap() {
  return (
    <svg viewBox="60 1212 1059 1344" className="block h-[1344px] w-[1059px]">
      <rect x="60" y="1212" width="1059" height="1344" fill="#f7f7ef" />
      {LAND.map(([fill, d], i) => (
        <path key={i} d={toPath(d, true)} fill={fill} />
      ))}
      <g fill="none" stroke="#f7f6ee" strokeLinejoin="round">
        {PALACE_LANES.map(([w, d], i) => (
          <path key={i} d={toPath(d)} strokeWidth={w} />
        ))}
      </g>
      <g fill="#b9e5f4">
        {WATER.map((d, i) => (
          <path key={i} d={toPath(d, true)} />
        ))}
      </g>
      <g fill="none" strokeLinejoin="round">
        {TRAILS.map((d, i) => (
          <path key={i} d={toPath(d)} stroke="#dfdccd" strokeWidth={3.4} />
        ))}
        {TRAILS.map((d, i) => (
          <path key={i} d={toPath(d)} stroke="#edeadd" strokeWidth={1.4} />
        ))}
      </g>
      <g fill="none" stroke="#efece7" strokeLinejoin="round">
        {EXPRESSWAY.map(([w, d], i) => (
          <path key={i} d={toPath(d)} strokeWidth={w} />
        ))}
      </g>
      <g fill="none" strokeLinejoin="round" strokeLinecap="round">
        {ROADS.map(([w, d], i) => (
          <path key={i} d={toPath(d)} stroke={w < 4 ? "#dedcd8" : "#cfcac2"} strokeWidth={w + (w < 4 ? 1.6 : 2.6)} />
        ))}
        {ROADS.map(([w, d], i) => (
          <path key={i} d={toPath(d)} stroke="#ffffff" strokeWidth={w} />
        ))}
      </g>
      {STATIONS.map(([fill, stroke, d], i) => (
        <path key={i} d={toPath(d, true)} fill={fill} fillOpacity={0.85} stroke={stroke} strokeWidth={1} strokeDasharray="3 1.5" />
      ))}
      <g fill="none">
        {RAILS.map((d, i) => (
          <path key={i} d={toPath(d)} stroke="#9aa0a4" strokeOpacity={0.55} strokeWidth={1.6} />
        ))}
        {SUBWAYS.map((d, i) => (
          <path key={i} d={toPath(d)} stroke="#dcdcf2" strokeWidth={1.6} strokeDasharray="2 7" />
        ))}
      </g>

      <RouteLayer width={23.5} shade={0.84} />
      <RouteLayer width={17} shade={0.93} />
      <RouteLayer width={12} shade={1} />

      <AreaLabel x={510} y={1243} width={253} size={58} spacing={9}>CHIYODA</AreaLabel>
      <AreaLabel x={308} y={1410} width={305} size={40} spacing={4}>KITANOMARUKOEN</AreaLabel>
      <AreaLabel x={702} y={1827} width={145} size={40} spacing={5}>CHIYODA</AreaLabel>
      <AreaLabel x={752} y={2168} width={209} size={40} spacing={5}>KOKYOGAIEN</AreaLabel>
      <text transform="translate(62 1358) rotate(-20)" fontSize="26" letterSpacing="3" fill="#aaa8a3" stroke="#f8f8f4" strokeWidth="4" paintOrder="stroke" className="font-['Roboto',sans-serif] font-medium">
        NUE
      </text>
      <text x="1108" y="2299" fontSize="24" fill="#8d8a86" stroke="#f8f8f4" strokeWidth="3" paintOrder="stroke" className="font-['Noto_Sans_CJK_JP',sans-serif] font-bold">
        鍛
      </text>

      {/* junction signs */}
      <rect x="694.5" y="1368.500" width="194" height="48" rx="8" fill="#fff" stroke="#b2e3d0" strokeWidth="3" />
      <text x="705" y="1403" fontSize="26" textLength="173" lengthAdjust="spacingAndGlyphs" fill="#bfe4d3" className="font-['Inter',sans-serif] font-bold">
        Takebashi JCT
      </text>
      <rect x="20" y="2076.500" width="197" height="48" rx="8" fill="#fff" stroke="#b2e3d0" strokeWidth="3" />
      <text x="60" y="2111" fontSize="25" textLength="38" lengthAdjust="spacingAndGlyphs" fill="#bfe4d3" className="font-['Inter',sans-serif] font-bold">
        ake
      </text>

      {/* route shields */}
      <path d="M40 1232H104Q107 1232 109 1235L118 1253Q119 1256 118 1259L108 1278Q106 1281.500 103 1281.500H40Z" fill="#b3cdfb" />
      <path d="M55 1235.500H103.500L115 1256.500L103.500 1278H55" fill="none" stroke="#fff" strokeWidth="2" />
      <text x="63.500" y="1265" fontSize="26" textLength="41" lengthAdjust="spacingAndGlyphs" fill="#fff" className="font-['Roboto',sans-serif] font-bold">302</text>
      <path d="M76 2175.500Q100 2175 124 2175.500Q134 2177 135.500 2188C137 2208 120 2226 100 2226.500C80 2226 63 2208 64.500 2188Q66 2177 76 2175.500Z" fill="#b3cdfb" />
      <path d="M78 2179Q100 2178.500 122 2179Q131 2180 132 2189C133 2206 118 2222 100 2223C82 2222 67 2206 68 2189Q69 2180 78 2179Z" fill="none" stroke="#fff" strokeWidth="2.200" />
      <text x="80" y="2206" fontSize="26" textLength="41" lengthAdjust="spacingAndGlyphs" fill="#fff" className="font-['Roboto',sans-serif] font-bold">246</text>
    </svg>
  );
}

function KmPin({ place, children }: { place: string; children: string }) {
  return (
    <div
      className={`absolute flex h-[49px] w-[141px] items-center justify-center rounded-full bg-white pt-[2px] text-[41px] leading-none whitespace-pre text-black shadow-[0_10px_24px_rgba(0,0,0,0.12)] ${place}`}
    >
      {children}
    </div>
  );
}

function StatusBar() {
  return (
    <div className="flex h-[160px] items-start justify-between pt-[58px] pr-[98px] pl-[119px]">
      <div className="flex items-center">
        <span className="w-[139px] font-['Inter',sans-serif] text-[50px] leading-[60px] font-semibold tracking-[-0.3px] whitespace-nowrap">21:20</span>
        <svg viewBox="0 0 52 52" className="h-[52px] w-[52px]">
          <circle cx="26" cy="26" r="26" fill="#007aff" />
          <path d="M12.500 25.500L36.500 13.600Q39.600 12.600 38.800 15.600L27.300 40Q25.600 42.400 25 39.500L24.600 28L13 27.700Q10.300 27.200 12.500 25.500Z" fill="#fff" />
        </svg>
      </div>
      <div className="flex items-start pt-[9px]">
        <svg viewBox="846 67 60 41" className="h-[41px] w-[60px]">
          <rect x="846" y="92" width="10" height="14" rx="3" />
          <rect x="862" y="85" width="10" height="21" rx="3" />
          <rect x="878" y="77" width="10" height="29" rx="3" fill="#c6c6c6" />
          <rect x="894" y="69" width="10" height="37" rx="3" fill="#c6c6c6" />
        </svg>
        <svg viewBox="926 67 51 41" className="ml-5 h-[41px] w-[51px]">
          <path d="M926.300 79.500C940 65.500 963 65.500 976.700 79.500L971.800 84.800C960.500 73.500 942.500 73.500 931.200 84.800Z" />
          <path d="M935 88.500C944 79.800 959 79.800 968 88.500L963 94C956.500 87.800 946.500 87.800 940 94Z" />
          <path d="M943.600 97.500C948 93.600 955 93.600 959.400 97.500L951.500 106Z" />
        </svg>
        <div className="ml-[22px] flex items-center">
          <div className="flex h-[41px] w-[75px] items-center justify-center overflow-hidden rounded-[13px] bg-[linear-gradient(90deg,#000_40%,#adadad_40%)] pr-[2px] font-['Inter',sans-serif] text-[35px] font-bold text-[#f7f7f7]">
            40
          </div>
          <div className="ml-[3px] h-[13px] w-1 rounded-r-full bg-[#adadad]" />
        </div>
      </div>
    </div>
  );
}

const STATS = [
  { value: "6'10''", label: "Avg. Pace" },
  { value: "30:51", label: "Time" },
  { value: "453", label: "Calories" },
  { value: "26 m", label: "Elevation Gain" },
  { value: "171", label: "Avg. Heart Rate", heart: true },
  { value: "161", label: "Cadence" },
];

function StatValue({ text }: { text: string }) {
  return (
    <span className="[word-spacing:5px]">
      {text.split(/(')/).map((part, i) =>
        part === "'" ? (
          <span key={i} className="px-[4.5px]">
            {part}
          </span>
        ) : (
          part
        ),
      )}
    </span>
  );
}

export default function App() {
  return (
    <main className="relative h-[2556px] w-[1179px] overflow-hidden bg-white font-['Liberation_Sans',Arial,sans-serif] text-black">
      <header className="h-[294px] border-b border-[#b2b2b2] bg-[#f7f7f7]">
        <StatusBar />
        <nav className="flex h-[131px] items-center justify-between pr-[45px] pl-6">
          <svg viewBox="0 0 40 66" className="h-[66px] w-10" fill="none" stroke="black" strokeWidth="6.500" strokeLinecap="round" strokeLinejoin="round">
            <path d="M34 8L7.500 33.500L34 58.500" />
          </svg>
          <svg viewBox="0 0 76 20" className="h-5 w-[76px]">
            <circle cx="10" cy="10" r="9.200" />
            <circle cx="38" cy="10" r="9.200" />
            <circle cx="65.500" cy="10" r="9.200" />
          </svg>
        </nav>
      </header>

      <section className="px-[60px]">
        <div className="h-[256px] pl-[9px] font-['Lato',sans-serif] text-[234px] leading-[258px] font-black tracking-[8px] whitespace-nowrap italic [-webkit-text-stroke:15px_black]">5.00</div>
        <div className="mt-[35px] text-[48px] leading-[55px] text-[#8d8d8d]">Kilometers</div>

        <div className="mt-20 grid w-[1132px] grid-cols-3 gap-y-20">
          {STATS.map((s) => (
            <div key={s.label}>
              <div className="flex items-center text-[77px] leading-[80px] tracking-[-0.8px] whitespace-pre [-webkit-text-stroke:2.4px_black]">
                <StatValue text={s.value} />
                {s.heart && (
                  <svg viewBox="0 0 45 42" className="mb-[6px] ml-[20px] h-[42px] w-[45px]" fill="none" stroke="#999" strokeWidth="4">
                    <path d="M22.500 38.500C12 28.500 2.200 22 2.200 13C2.200 6.500 7 2.200 12.500 2.200C17 2.200 20.500 4.500 22.500 8.500C24.500 4.500 28 2.200 32.500 2.200C38 2.200 42.800 6.500 42.800 13C42.800 22 33 28.500 22.500 38.500Z" />
                  </svg>
                )}
              </div>
              <div className="mt-[7px] w-[260px] text-[48px] leading-[55px] tracking-[0.6px] text-[#8d8d8d]">{s.label}</div>
            </div>
          ))}
        </div>
      </section>

      <section className="relative mx-[60px] mt-[73px] h-[1344px] w-[1059px] overflow-hidden rounded-t-[14px]">
        <StreetMap />

        <div className="absolute top-[60px] left-[60px] flex h-[109px] w-[355px] items-center justify-center rounded-xl bg-white pt-[2px] text-[42px] tracking-[0.2px] whitespace-nowrap shadow-[0_10px_40px_rgba(0,0,0,0.1)]">
          Chiyoda, Japan
        </div>

        <KmPin place="top-[726px] left-[841px]">1 km</KmPin>
        <KmPin place="top-[235px] left-[740px]">2 km</KmPin>
        <KmPin place="top-[391px] left-[183px]">3 km</KmPin>
        <KmPin place="top-[854px] left-[35px]">4 km</KmPin>
        <div className="absolute top-[1073px] left-[531px] h-[60px] w-[60px] rounded-full border-[9px] border-white bg-[#4fd010]" />
        <KmPin place="top-[1091px] left-[516px]">5 km</KmPin>
        <div className="absolute top-[1088px] left-[563px] h-[60px] w-[60px] rounded-full border-[9px] border-white bg-[#f50000] outline outline-[#fbb]" />

        <div className="absolute top-[1220px] left-[791px] flex h-[160px] w-[208px] items-start rounded-xl bg-white pt-[34px] pl-3">
          <span className="mt-[6px] w-[91px] text-[42px] leading-[56px]">26°</span>
          <svg viewBox="0 0 78 56" className="mt-[2px] h-[56px] w-[78px]" fill="none" stroke="black" strokeWidth="6" strokeLinejoin="round">
            <path d="M19 52H59C69 52 75 45.500 75 36.500C75 27 67.500 20.500 58 21C56.500 10 48 3 37 3C26 3 18 10.500 17.500 22C8.500 23 3 29 3 37C3 45.500 9.500 52 19 52Z" />
          </svg>
        </div>
      </section>

      <div className="absolute bottom-6 left-[380px] h-[15px] w-[420px] rounded-full bg-black" />
    </main>
  );
}
